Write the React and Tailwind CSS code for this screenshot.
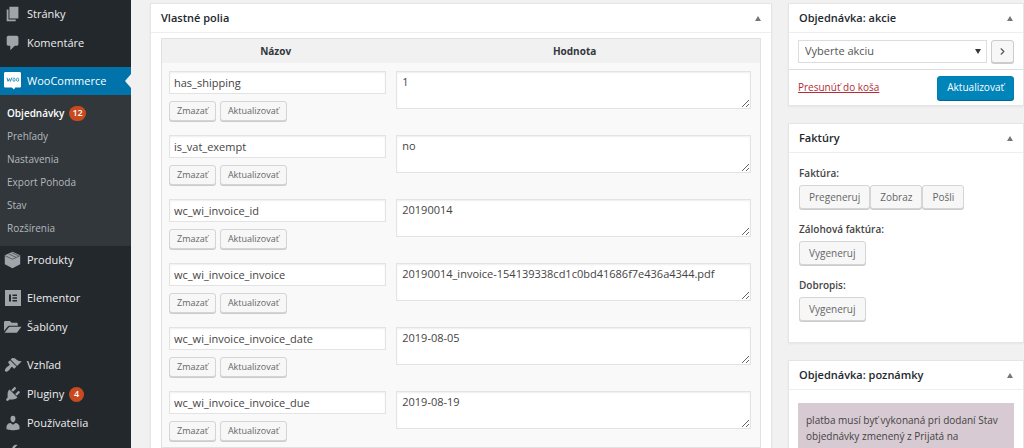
import React from 'react';
import { ChevronRight } from 'lucide-react';

const icons = {
  page: 'M6 15V2h10v13H6zm-1 1h8v2H3V5h2v11z',
  comments: 'M5 2h9c1.1 0 2 .9 2 2v7c0 1.1-.9 2-2 2h-2l-5 5v-5H5c-1.1 0-2-.9-2-2V4c0-1.1.9-2 2-2z',
  folder: 'M0 14.500V5c0-1 .6-1.600 1.500-1.600h4.500c1.200 0 1.500 1.800 2.700 1.800h5.300c.8 0 1.300.5 1.300 1.300V8.500H6.500c-1.200 0-2 .3-2.600 1.200L0 14.500zm.6 2l4.600-6c.4-.5.9-.8 1.600-.8h12.600l-4.400 5.900c-.5.700-1 .9-1.700.9H.600z',
  appearance:
    'M14.48 11.06L7.41 3.99l1.5-1.5c.5-.56 2.3-.47 3.51.32 1.21.8 1.43 1.28 2.91 2.1 1.18.64 2.45 1.26 4.45.85zm-.71.71L6.7 4.7 4.93 6.47c-.39.39-.39 1.02 0 1.41l1.06 1.06c.39.39.39 1.03 0 1.42-.6.6-1.43 1.11-2.21 1.69-.35.26-.7.53-1.01.84C1.43 14.23.4 16.08 1.4 17.07c.99 1 2.84-.03 4.18-1.36.31-.31.58-.66.85-1.02.57-.78 1.08-1.61 1.69-2.21.39-.39 1.02-.39 1.41 0l1.06 1.06c.39.39 1.02.39 1.41 0z',
  plugins:
    'M13.11 4.36L9.87 7.6 8 5.73l3.24-3.24c.35-.34 1.05-.2 1.56.32.52.51.66 1.21.31 1.55zm-8 1.77l.91-1.12 9.01 9.01-1.19.84c-.71.71-2.63 1.16-3.82 1.16H6.14L4.9 17.26c-.59.59-1.54.59-2.12 0-.59-.58-.59-1.53 0-2.12l1.24-1.24v-3.88c0-1.13.4-3.19 1.09-3.89zm7.26 3.97l3.24-3.24c.34-.35 1.04-.21 1.55.31.52.51.66 1.21.31 1.55l-3.24 3.25z',
  users:
    'M10 9.25c-2.27 0-2.73-3.44-2.73-3.44C7 4.02 7.82 2 9.97 2c2.16 0 2.98 2.02 2.71 3.81 0 0-.41 3.44-2.68 3.44zm0 2.57L12.72 10c2.39 0 4.52 2.33 4.52 4.53v2.49s-3.65 1.13-7.24 1.13c-3.65 0-7.24-1.13-7.24-1.13v-2.49c0-2.25 1.94-4.48 4.47-4.48z',
  tools:
    'M16.68 9.77c-1.34 1.34-3.3 1.67-4.95.99l-5.41 6.52c-.99.99-2.59.99-3.58 0s-.99-2.59 0-3.57l6.52-5.42c-.68-1.65-.35-3.61.99-4.95 1.28-1.28 3.12-1.62 4.72-1.06l-2.89 2.89 2.82 2.82 2.86-2.87c.53 1.58.18 3.39-1.08 4.65z',
};

const submenu = ['Prehľady', 'Nastavenia', 'Export Pohoda', 'Stav', 'Rozšírenia'];

const fields = [
  { name: 'has_shipping', value: '1' },
  { name: 'is_vat_exempt', value: 'no' },
  { name: 'wc_wi_invoice_id', value: '20190014' },
  { name: 'wc_wi_invoice_invoice', value: '20190014_invoice-154139338cd1c0bd41686f7e436a4344.pdf' },
  { name: 'wc_wi_invoice_invoice_date', value: '2019-08-05' },
  { name: 'wc_wi_invoice_invoice_due', value: '2019-08-19' },
];

const invoices = [
  { label: 'Faktúra:', actions: ['Pregeneruj', 'Zobraz', 'Pošli'] },
  { label: 'Zálohová faktúra:', actions: ['Vygeneruj'] },
  { label: 'Dobropis:', actions: ['Vygeneruj'] },
];

const MenuIcon = ({ name }) => {
  if (name === 'woo') {
    return (
      <svg viewBox="0 0 18 18" className="size-[18px] shrink-0">
        <path d="M1.500 0h14C16.500 0 17 .6 17 1.500v12.500c0 1-.5 1.500-1.500 1.500H11.200l-1.200 2-2.200-2H1.500C.5 15.500 0 15 0 14v-12.500C0 .6.500 0 1.500 0z" fill="#fff" />
        <path d="M3 5.800l1 3.600 1.500-2.800.9 2.800L7.800 5.600" fill="none" stroke="#2b8fc0" strokeWidth="1" />
        <ellipse cx="10" cy="7.700" rx="1.100" ry="1.700" fill="none" stroke="#2b8fc0" strokeWidth=".9" />
        <ellipse cx="13.600" cy="7.700" rx="1.100" ry="1.700" fill="none" stroke="#2b8fc0" strokeWidth=".9" />
      </svg>
    );
  }
  if (name === 'products') {
    return (
      <svg viewBox="0 0 18 18" className="size-[18px] shrink-0">
        <path d="M8.500.8l7.700 3.400v9l-7.700 4-7.700-4v-9z" fill="#a0a5aa" />
        <path d="M.8 4.600l7.700 3.600 7.700-3.600M4.500 2.800l7.600 3.600M7.500 1.600l7.400 3.300" fill="none" stroke="#4a4f54" strokeWidth=".8" />
      </svg>
    );
  }
  if (name === 'elementor') {
    return (
      <svg viewBox="0 0 18 18" className="size-[18px] shrink-0">
        <path d="M1 1h16v16H1z" fill="#a0a5aa" />
        <path d="M5 5.500h2v7H5zM8.500 5.500H13v1.500H8.500zM8.500 8.300H13v1.500H8.500zM8.500 11H13v1.500H8.500z" fill="#23282d" />
      </svg>
    );
  }
  return (
    <svg viewBox="0 0 20 20" className="size-[18px] shrink-0">
      <path d={icons[name]} fill="#a0a5aa" />
    </svg>
  );
};

const Badge = ({ children }) => (
  <span className="flex h-[15px] min-w-[15px] items-center justify-center rounded-full bg-[#ca4a1f] px-[3px] text-[9px] font-semibold text-white">
    {children}
  </span>
);

const MenuItem = ({ icon, label, badge }) => (
  <li>
    <a href="#" className="flex h-7 items-center gap-[5px] pl-1 text-[11px] text-[#eee]">
      <MenuIcon name={icon} />
      {label}
      {badge && <Badge>{badge}</Badge>}
    </a>
  </li>
);

const Sidebar = () => (
  <nav className="w-[131px] shrink-0 space-y-2.5 bg-[#23282d]">
    <ul className="space-y-px">
      <MenuItem icon="page" label="Stránky" />
      <MenuItem icon="comments" label="Komentáre" />
    </ul>
    <div>
      <a href="#" className="relative flex h-7 items-center gap-[5px] bg-[#0073aa] pl-1 text-[11px] text-white">
        <MenuIcon name="woo" />
        WooCommerce
        <svg viewBox="0 0 6 14" className="absolute right-0 h-3.5 w-1.5">
          <path d="M6 0v14L0 7z" fill="#f1f1f1" />
        </svg>
      </a>
      <ul className="flex flex-col bg-[#32373c] px-[7px] py-1.5 text-[10px] text-[#b4b9be]">
        <li className="flex h-6 items-center">
          <a href="#" className="flex items-center gap-[5px] font-semibold text-white">
            Objednávky <Badge>12</Badge>
          </a>
        </li>
        {submenu.map((item) => (
          <li key={item} className="flex h-[23px] items-center">
            <a href="#">{item}</a>
          </li>
        ))}
      </ul>
      <ul>
        <MenuItem icon="products" label="Produkty" />
      </ul>
    </div>
    <ul className="space-y-px">
      <MenuItem icon="elementor" label="Elementor" />
      <MenuItem icon="folder" label="Šablóny" />
    </ul>
    <ul className="space-y-px">
      <MenuItem icon="appearance" label="Vzhľad" />
      <MenuItem icon="plugins" label="Pluginy" badge="4" />
      <MenuItem icon="users" label="Používatelia" />
      <MenuItem icon="tools" label="Nástroje" />
    </ul>
  </nav>
);

const Panel = ({ title, children }) => (
  <section className="border border-[#e5e5e5] bg-white shadow-xs">
    <header className="flex h-[29px] items-center justify-between border-b border-[#eee] px-2.5 pt-px">
      <h2 className="text-[11px] font-semibold text-[#23282d]">{title}</h2>
      <button type="button" aria-label={title}>
        <svg viewBox="0 0 6 5" className="h-[5px] w-1.5">
          <path d="M3 0l3 5H0z" fill="#72777c" />
        </svg>
      </button>
    </header>
    {children}
  </section>
);

const Button = ({ small, children }) => (
  <button
    type="button"
    className={`rounded-[3px] border border-[#d5d5d5] bg-[#f7f7f7] text-[#666] shadow-[0_1px_0_#ccc] ${
      small ? 'h-5 px-[7px] text-[9px]' : 'h-6 px-[9px] text-[10px]'
    }`}
  >
    {children}
  </button>
);

const CustomFields = () => (
  <Panel title="Vlastné polia">
    <div className="px-2.5 pt-[5px] pb-5">
      <table className="w-full table-fixed border-separate border-spacing-0 border border-[#e1e1e1] bg-[#f9f9f9]">
        <thead className="bg-[#f1f1f1]">
          <tr className="h-6 text-[10px] text-[#32373c]">
            <th className="w-[38%] font-bold">Názov</th>
            <th className="font-bold">Hodnota</th>
          </tr>
        </thead>
        <tbody>
          {fields.map((field) => (
            <tr key={field.name} className="h-16 align-top">
              <td className="pt-2 pr-[3px] pl-[7px]">
                <input
                  type="text"
                  aria-label="Názov"
                  defaultValue={field.name}
                  className="block h-[23px] w-full border border-[#e3e3e3] bg-white px-1 text-[11px] text-[#444] shadow-[inset_0_1px_2px_rgba(0,0,0,0.07)]"
                />
                <div className="mt-[7px] flex gap-1">
                  <Button small>Zmazať</Button>
                  <Button small>Aktualizovať</Button>
                </div>
              </td>
              <td className="pt-2 pr-[9px] pl-[7px]">
                <textarea
                  aria-label="Hodnota"
                  defaultValue={field.value}
                  className="block h-[38px] w-full resize overflow-hidden border border-[#e3e3e3] bg-white px-[5px] py-0.5 text-[11px] leading-4 text-[#444] shadow-[inset_0_1px_2px_rgba(0,0,0,0.07)]"
                />
              </td>
            </tr>
          ))}
        </tbody>
      </table>
    </div>
  </Panel>
);

const OrderActions = () => (
  <Panel title="Objednávka: akcie">
    <div className="flex h-[37px] items-center gap-1 border-b border-[#ddd] px-[9px]">
      <div className="relative flex-1">
        <select
          aria-label="Objednávka: akcie"
          className="block h-[23px] w-full appearance-none border border-[#ddd] bg-white px-1.5 text-[11px] text-[#555]"
        >
          <option>Vyberte akciu</option>
        </select>
        <svg viewBox="0 0 6 5" className="pointer-events-none absolute top-[9px] right-1.5 h-[5px] w-1.5">
          <path d="M0 0h6L3 5z" fill="#32373c" />
        </svg>
      </div>
      <button
        type="button"
        aria-label="Použiť"
        className="flex h-[23px] w-[23px] items-center justify-center rounded-[3px] border border-[#ccc] bg-[#f7f7f7] text-[#555] shadow-[0_1px_0_#ccc]"
      >
        <ChevronRight size={11} strokeWidth={2.5} />
      </button>
    </div>
    <div className="flex h-[35px] items-center justify-between px-[9px]">
      <a href="#" className="text-[10px] text-[#b32d35] underline">
        Presunúť do koša
      </a>
      <button
        type="button"
        className="h-6 rounded-[3px] border border-[#0080b3] bg-[#0085ba] px-[9px] text-[10px] text-white shadow-[0_1px_0_#006799]"
      >
        Aktualizovať
      </button>
    </div>
  </Panel>
);

const Invoices = () => (
  <Panel title="Faktúry">
    <div className="space-y-[11px] px-2.5 pt-[11px] pb-[21px]">
      {invoices.map((invoice) => (
        <div key={invoice.label}>
          <h3 className="mb-[3px] text-[10px] leading-[18px] font-semibold text-[#444]">{invoice.label}</h3>
          <div className="flex">
            {invoice.actions.map((action) => (
              <Button key={action}>{action}</Button>
            ))}
          </div>
        </div>
      ))}
    </div>
  </Panel>
);

const OrderNotes = () => (
  <Panel title="Objednávka: poznámky">
    <div className="px-[9px] pt-[13px]">
      <p className="bg-[#d7cad2] p-2 pt-[9px] text-[10px] leading-4 text-[#444]">
        platba musí byť vykonaná pri dodaní Stav objednávky zmenený z Prijatá na
      </p>
    </div>
  </Panel>
);

const App = () => {
  return (
    <div className="flex h-screen overflow-hidden bg-[#f1f1f1] font-['Open_Sans','Noto_Sans',sans-serif]">
      <Sidebar />
      <main className="flex min-w-0 flex-1 items-start gap-4 pt-[3px] pl-[19px]">
        <div className="min-w-0 flex-1">
          <CustomFields />
        </div>
        <aside className="w-[236px] shrink-0 space-y-[17px]">
          <OrderActions />
          <Invoices />
          <OrderNotes />
        </aside>
      </main>
    </div>
  );
};

export default App;
